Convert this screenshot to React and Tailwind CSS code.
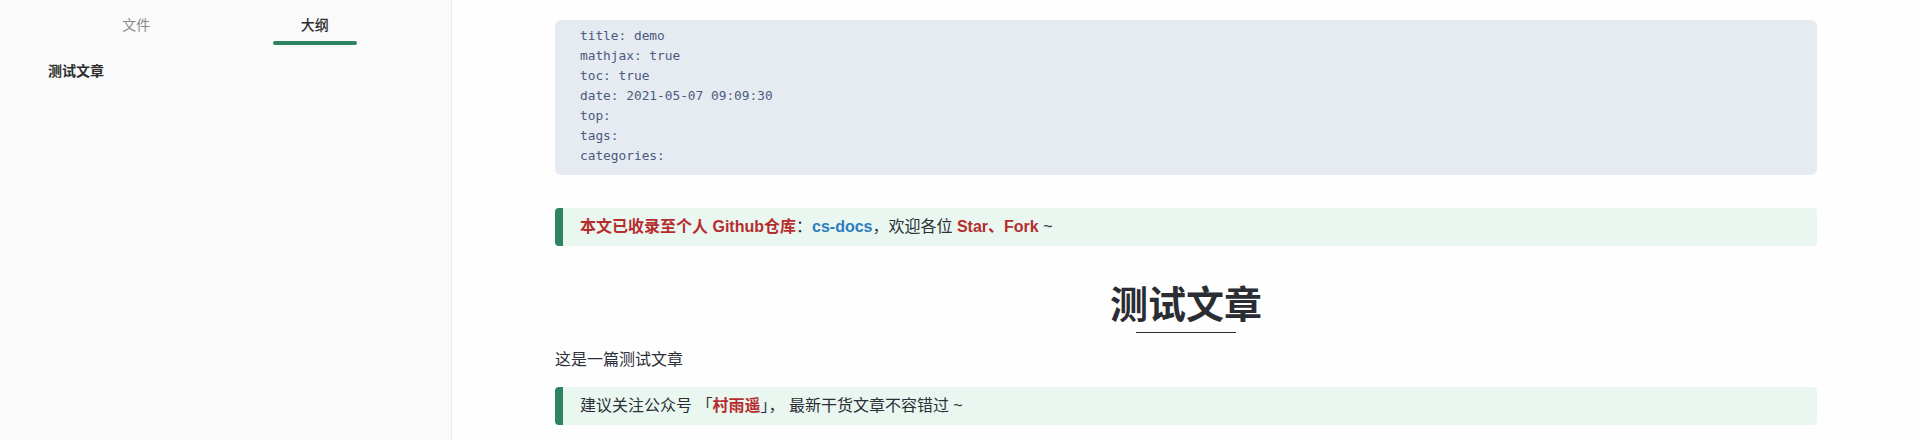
export default function App() {
  const sans = { fontFamily: '"Liberation Sans", "Noto Sans CJK SC", sans-serif' };
  return (
    <div className="flex w-[1920px] h-[440px] overflow-hidden bg-[#fefefe]" style={sans}>
      <aside className="w-[452px] shrink-0 bg-[#fafafa] border-r border-[#ececec]">
        <div className="flex px-[47px] h-[45px]">
          <div className="flex-1 flex flex-col items-center">
            <span className="pt-[16px] text-[14px] leading-[18px] text-[#8a8a8a]">文件</span>
          </div>
          <div className="flex-1 flex flex-col items-center">
            <span className="pt-[16px] text-[14px] leading-[18px] text-[#2c2c2c] font-medium">大纲</span>
            <div className="mt-[7px] h-[4px] w-[84px] rounded-full bg-[#2e8460]" />
          </div>
        </div>
        <div className="mt-[16px] pl-[48px] text-[14px] leading-[20px] font-bold text-[#2c2c2c]">测试文章</div>
      </aside>
      <main className="flex-1 flex justify-center">
        <div className="w-[1262px] pt-[20px]">
          <pre
            className="rounded-[6px] bg-[#e6ebf2] pl-[25px] pt-[6px] pb-[9px] text-[12.8px] leading-[20px] text-[#4b5a7e]"
            style={{ fontFamily: '"DejaVu Sans Mono", "Liberation Mono", monospace' }}
          >{`title: demo
mathjax: true
toc: true
date: 2021-05-07 09:09:30
top:
tags:
categories:`}</pre>
          <div className="mt-[33px] h-[38px] flex items-center rounded-[4px] border-l-[8px] border-[#2e8460] bg-[#eaf7f0] pl-[17px] text-[16px] text-[#2c2f36]">
            <span className="font-bold text-[#b52e2e]">本文已收录至个人 Github仓库</span>
            <span>：</span>
            <span className="font-bold text-[#2a7fc0]">cs-docs</span>
            <span>，欢迎各位</span>
            <span className="font-bold text-[#b52e2e]">&nbsp;Star、Fork</span>
            <span>&nbsp;~</span>
          </div>
          <div className="mt-[36px] flex flex-col items-center">
            <h1 className="text-[38px] leading-[46px] font-bold text-[#2a2d33]">测试文章</h1>
            <div className="mt-[4px] h-[1px] w-[100px] bg-[#2a2d33]" />
          </div>
          <p className="mt-[15px] text-[16px] leading-[24px] text-[#2c2f36]">这是一篇测试文章</p>
          <div className="mt-[15px] h-[38px] flex items-center rounded-[4px] border-l-[8px] border-[#2e8460] bg-[#eaf7f0] pl-[17px] text-[16px] text-[#2c2f36]">
            <span>建议关注公众号 「</span>
            <span className="font-bold text-[#b52e2e]">村雨遥</span>
            <span>」，&nbsp;最新干货文章不容错过 ~</span>
          </div>
        </div>
      </main>
    </div>
  );
}
